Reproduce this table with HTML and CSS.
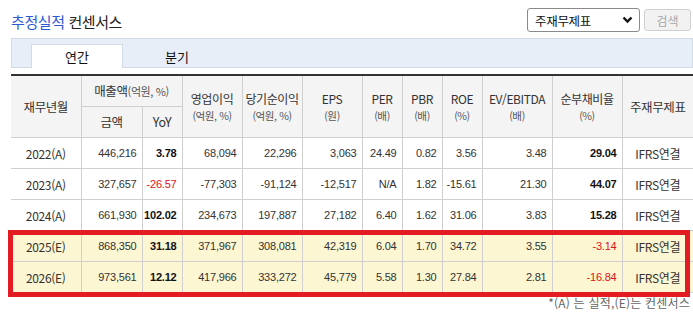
FILE: index.html
```html
<!DOCTYPE html>
<html lang="ko">
<head>
<meta charset="utf-8">
<link rel="stylesheet" href="styles.css">
</head>
<body>
<div class="page">
  <div class="topbar">
    <h2 class="title"><span class="blue">추정실적</span> 컨센서스</h2>
    <div class="controls">
      <div class="select">
        <span>주재무제표</span>
        <svg width="11" height="8" viewBox="0 0 11 8"><path d="M1.5 1.5 L5.5 5.5 L9.5 1.5" fill="none" stroke="#111" stroke-width="2.4"/></svg>
      </div>
      <div class="btn">검색</div>
    </div>
  </div>
  <div class="tabs">
    <div class="tab active">연간</div>
    <div class="tab">분기</div>
  </div>
  <div class="tablewrap">
    <table class="grid">
      <colgroup>
        <col style="width:70px"><col style="width:61px"><col style="width:40px"><col style="width:60px"><col style="width:60px"><col style="width:60px"><col style="width:40px"><col style="width:40px"><col style="width:40px"><col style="width:70px"><col style="width:70px"><col style="width:71px">
      </colgroup>
      <thead>
        <tr>
          <th rowspan="2">재무년월</th>
          <th colspan="2">매출액<span class="unit">(억원, %)</span></th>
          <th rowspan="2"><span class="l1">영업이익</span><span class="unit blk">(억원, %)</span></th>
          <th rowspan="2"><span class="l1">당기순이익</span><span class="unit blk">(억원, %)</span></th>
          <th rowspan="2"><span class="l1">EPS</span><span class="unit blk">(원)</span></th>
          <th rowspan="2"><span class="l1">PER</span><span class="unit blk">(배)</span></th>
          <th rowspan="2"><span class="l1">PBR</span><span class="unit blk">(배)</span></th>
          <th rowspan="2"><span class="l1">ROE</span><span class="unit blk">(%)</span></th>
          <th rowspan="2"><span class="l1">EV/EBITDA</span><span class="unit blk">(배)</span></th>
          <th rowspan="2"><span class="l1">순부채비율</span><span class="unit blk">(%)</span></th>
          <th rowspan="2">주재무제표</th>
        </tr>
        <tr>
          <th>금액</th>
          <th>YoY</th>
        </tr>
      </thead>
      <tbody>
        <tr>
          <td class="yr">2022(A)</td><td>446,216</td><td class="b">3.78</td><td>68,094</td><td>22,296</td><td>3,063</td><td>24.49</td><td>0.82</td><td>3.56</td><td>3.48</td><td class="b">29.04</td><td class="fs">IFRS연결</td>
        </tr>
        <tr>
          <td class="yr">2023(A)</td><td>327,657</td><td class="neg">-26.57</td><td>-77,303</td><td>-91,124</td><td>-12,517</td><td>N/A</td><td>1.82</td><td>-15.61</td><td>21.30</td><td class="b">44.07</td><td class="fs">IFRS연결</td>
        </tr>
        <tr>
          <td class="yr">2024(A)</td><td>661,930</td><td class="b">102.02</td><td>234,673</td><td>197,887</td><td>27,182</td><td>6.40</td><td>1.62</td><td>31.06</td><td>3.83</td><td class="b">15.28</td><td class="fs">IFRS연결</td>
        </tr>
        <tr class="est">
          <td class="yr">2025(E)</td><td>868,350</td><td class="b">31.18</td><td>371,967</td><td>308,081</td><td>42,319</td><td>6.04</td><td>1.70</td><td>34.72</td><td>3.55</td><td class="neg">-3.14</td><td class="fs">IFRS연결</td>
        </tr>
        <tr class="est">
          <td class="yr">2026(E)</td><td>973,561</td><td class="b">12.12</td><td>417,966</td><td>333,272</td><td>45,779</td><td>5.58</td><td>1.30</td><td>27.84</td><td>2.81</td><td class="neg">-16.84</td><td class="fs">IFRS연결</td>
        </tr>
      </tbody>
    </table>
    <div class="redbox"></div>
  </div>
  <p class="note">*(A) 는 실적,(E)는 컨센서스</p>
</div>
</body>
</html>
```
FILE: styles.css
```css
html, body {
  margin: 0;
  padding: 0;
  background: #fff;
}
body {
  font-family: "Noto Sans CJK KR", "Noto Sans", sans-serif;
  color: #333;
}
.page {
  width: 682px;
  padding-left: 11px;
}
.topbar {
  display: flex;
  justify-content: space-between;
  align-items: center;
  height: 24px;
  padding-top: 8px;
}
.title {
  margin: 0;
  font-size: 15px;
  font-weight: normal;
  line-height: 24px;
  color: #222;
  letter-spacing: -0.4px;
  padding-top: 3px;
}
.blue {
  color: #2d5bd5;
}
.controls {
  display: flex;
  align-items: center;
  gap: 4px;
  padding-right: 2px;
}
.select {
  box-sizing: border-box;
  width: 113px;
  height: 24px;
  border: 1px solid #8a8a8a;
  border-radius: 3px;
  display: flex;
  align-items: center;
  justify-content: space-between;
  padding: 0 6px 0 7px;
  font-size: 12.5px;
  color: #111;
  letter-spacing: -0.3px;
}
.select svg {
  display: block;
}
.btn {
  box-sizing: border-box;
  width: 47px;
  height: 22px;
  border: 1px solid #cfcfcf;
  border-radius: 3px;
  background: #f2f2f2;
  color: #a8a8a8;
  font-size: 12px;
  display: flex;
  align-items: center;
  justify-content: center;
}
.tabs {
  box-sizing: border-box;
  margin-top: 6px;
  height: 30px;
  border: 1px solid #d3dbe7;
  background: #e8eef8;
  display: flex;
  align-items: flex-end;
  padding-left: 19px;
  gap: 8px;
}
.tab {
  box-sizing: border-box;
  width: 92px;
  height: 24px;
  margin-bottom: -1px;
  display: flex;
  align-items: center;
  justify-content: center;
  font-size: 13px;
  color: #111;
}
.tab.active {
  background: #fff;
  border: 1px solid #d3dbe7;
  border-bottom: none;
}
.tablewrap {
  position: relative;
  margin-top: 6px;
}
.grid {
  width: 682px;
  table-layout: fixed;
  border-collapse: collapse;
  border-top: 2px solid #333;
}
.grid th {
  background: #f4f4f4;
  font-weight: normal;
  color: #333;
  height: 30px;
  padding: 0;
  border: 1px solid #cfcfcf;
  border-top: none;
  font-size: 12.5px;
  letter-spacing: -0.4px;
  line-height: 18px;
  text-align: center;
  vertical-align: middle;
}
.grid th .l1 {
  display: block;
  font-size: 12px;
  line-height: 18px;
}
.grid th .blk {
  display: block;
  font-size: 10.5px;
  line-height: 16px;
}
.grid tr th:first-child {
  border-left: none;
}
.grid tr th:last-child,
.grid tr td:last-child {
  border-right: none;
}
.unit {
  font-size: 11px;
  color: #555;
}
.grid td {
  height: 30px;
  padding: 0 5px 0 0;
  border: 1px solid #cfcfcf;
  font-family: "Liberation Sans", Arial, sans-serif;
  font-size: 11px;
  letter-spacing: -0.2px;
  text-align: right;
  color: #333;
  vertical-align: middle;
  white-space: nowrap;
}
.grid tr td:first-child {
  border-left: none;
}
.grid td.yr,
.grid td.fs {
  font-family: "Noto Sans CJK KR", sans-serif;
  font-size: 12px;
  text-align: center;
  padding: 0;
  letter-spacing: -0.3px;
}
.grid td.b {
  font-weight: bold;
  color: #111;
}
.grid td.neg {
  color: #e0101a;
}
.grid tr.est td {
  background: #fcf6d2;
}
.redbox {
  position: absolute;
  left: -3px;
  top: 156px;
  width: 682px;
  height: 67px;
  box-sizing: border-box;
  border: 5px solid #e31b23;
  pointer-events: none;
}
.note {
  margin: 3px 3px 0 0;
  text-align: right;
  font-size: 12px;
  line-height: 14px;
  color: #666;
  letter-spacing: 0.2px;
}
```
